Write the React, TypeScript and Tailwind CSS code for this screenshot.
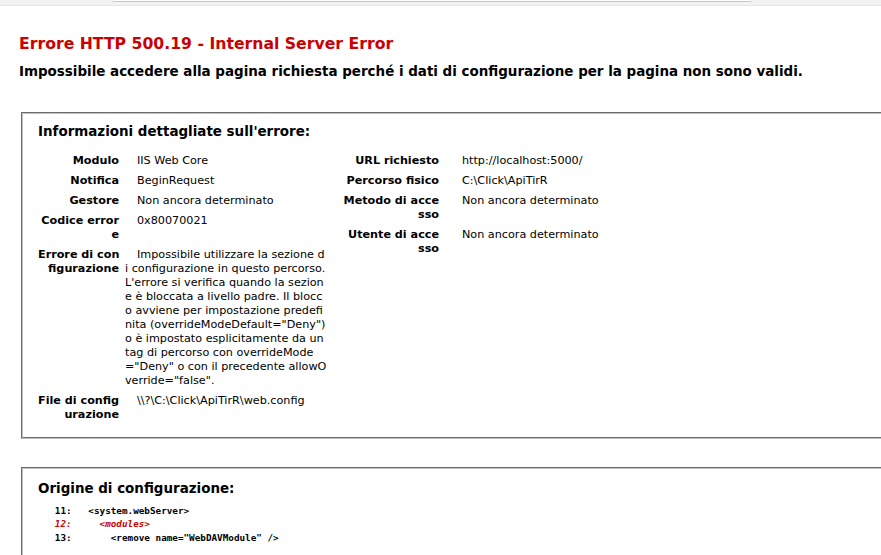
export default function App() {
  const th = "py-[3px] text-right font-bold whitespace-nowrap";
  const td = "py-[3px] indent-[12px] whitespace-nowrap";
  return (
    <div className="w-[881px] h-[555px] overflow-hidden bg-white text-black font-['DejaVu_Sans',Verdana,sans-serif] text-[11.2px] leading-[14px]">
      <div className="flex h-[6px] bg-[#f3f3f3] border-b border-[#e6e6e6]">
        <div className="w-[112px]" />
        <div className="w-[640px] h-[2px] bg-white border-b border-[#c6c6c6] rounded-b-[4px]" />
      </div>

      <div className="pl-[19px] pt-[28px]">
        <h3 className="text-[15.68px] leading-[19px] font-bold text-[#cc0000] whitespace-nowrap">
          Errore HTTP 500.19 - Internal Server Error
        </h3>
        <h4 className="mt-[11px] text-[13.44px] leading-[16px] font-bold whitespace-nowrap">
          Impossibile accedere alla pagina richiesta perché i dati di configurazione per la pagina non sono validi.
        </h4>
      </div>

      <div className="ml-[21px] mt-[32px] w-[900px] border-2 [border-style:groove] border-[#c0c0c0] pt-[10px] px-[15px] pb-[12px]">
        <h4 className="text-[13.44px] leading-[16px] font-bold">Informazioni dettagliate sull'errore:</h4>
        <div className="mt-[11px] flex items-start gap-[15px]">
          <div className="grid grid-cols-[81px_202px] gap-x-[6px]">
            <div className={th}>Modulo</div>
            <div className={td}>IIS Web Core</div>
            <div className={th}>Notifica</div>
            <div className={td}>BeginRequest</div>
            <div className={th}>Gestore</div>
            <div className={td}>Non ancora determinato</div>
            <div className={th}>
              Codice error
              <br />e
            </div>
            <div className={td}>0x80070021</div>
            <div className={th}>
              Errore di con
              <br />
              figurazione
            </div>
            <div className={td}>
              Impossibile utilizzare la sezione d
              <br />i configurazione in questo percorso.
              <br />L'errore si verifica quando la sezion
              <br />e è bloccata a livello padre. Il blocc
              <br />o avviene per impostazione predefi
              <br />
              nita (overrideModeDefault="Deny")
              <br />o è impostato esplicitamente da un
              <br />
              tag di percorso con overrideMode
              <br />
              ="Deny" o con il precedente allowO
              <br />
              verride="false".
            </div>
            <div className={th}>
              File di config
              <br />
              urazione
            </div>
            <div className={td}>\\?\C:\Click\ApiTirR\web.config</div>
          </div>

          <div className="grid grid-cols-[97px_1fr] gap-x-[11px]">
            <div className={th}>URL richiesto</div>
            <div className={td}>http://localhost:5000/</div>
            <div className={th}>Percorso fisico</div>
            <div className={td}>C:\Click\ApiTirR</div>
            <div className={th}>
              Metodo di acce
              <br />
              sso
            </div>
            <div className={td}>Non ancora determinato</div>
            <div className={th}>
              Utente di acce
              <br />
              sso
            </div>
            <div className={td}>Non ancora determinato</div>
          </div>
        </div>
      </div>

      <div className="ml-[21px] mt-[28px] w-[900px] h-[200px] border-2 [border-style:groove] border-[#c0c0c0] pt-[12px] px-[15px] pb-[12px]">
        <h4 className="text-[13.44px] leading-[16px] font-bold">Origine di configurazione:</h4>
        <pre className="mt-[7px] font-['DejaVu_Sans_Mono',Consolas,monospace] font-bold text-[9.3px] leading-[13.4px] whitespace-pre">
          <div>{"   11:   <system.webServer>"}</div>
          <div className="text-[#cc0000] italic">{"   12:     <modules>"}</div>
          <div>{"   13:       <remove name=\"WebDAVModule\" />"}</div>
        </pre>
      </div>
    </div>
  );
}
